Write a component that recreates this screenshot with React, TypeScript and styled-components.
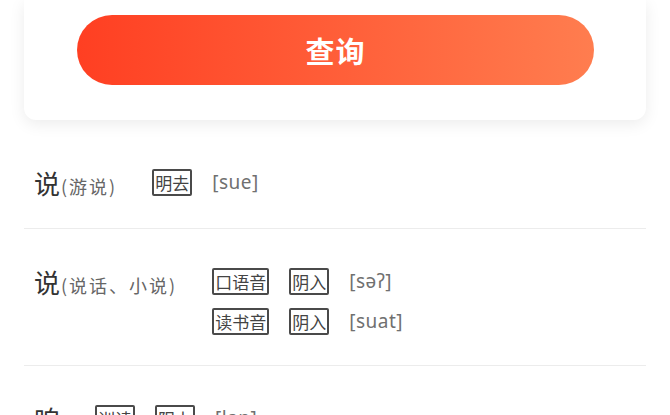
import React from "react";
import styled, { createGlobalStyle } from "styled-components";

const Global = createGlobalStyle`
  html, body { margin: 0; padding: 0; background: #fff; }
  body { font-family: "Noto Sans CJK SC", "Noto Sans", sans-serif; overflow: hidden; }
`;

const Page = styled.div`
  width: 670px;
  height: 415px;
  overflow: hidden;
  background: #fff;
`;

const Card = styled.div`
  margin: 0 24px;
  padding: 15px 52px 35px 53px;
  background: #fff;
  border-radius: 0 0 12px 12px;
  box-shadow: 0 4px 16px rgba(0, 0, 0, 0.08);
`;

const SearchButton = styled.button`
  display: flex;
  align-items: center;
  justify-content: center;
  width: 100%;
  height: 70px;
  border: none;
  border-radius: 35px;
  background: linear-gradient(90deg, #ff3f22 0%, #ff7d4f 100%);
  color: #fff;
  font-family: "Noto Sans CJK SC", sans-serif;
  font-size: 29px;
  font-weight: 700;
  letter-spacing: 1px;
  padding: 0;
`;

const List = styled.div`
  margin: 10px 24px 0;
`;

const Row = styled.div`
  display: flex;
  align-items: flex-start;
  gap: 35px;
  padding: 38px 10px 30px;
  border-bottom: 1px solid #ececec;
`;

const Label = styled.div`
  display: flex;
  align-items: baseline;
  height: 30px;
  line-height: 30px;
  white-space: nowrap;
`;

const Char = styled.span`
  font-size: 26px;
  line-height: 30px;
  color: #333;
`;

const Note = styled.span`
  font-size: 18px;
  line-height: 30px;
  color: #666;
  letter-spacing: 2px;
  margin-left: 1px;
`;

const Readings = styled.div`
  display: flex;
  flex-direction: column;
  gap: 13px;
  padding-top: 1px;
`;

const Reading = styled.div`
  display: flex;
  align-items: center;
  gap: 20px;
  height: 27px;
`;

const Tag = styled.span`
  display: flex;
  align-items: center;
  box-sizing: border-box;
  height: 27px;
  padding: 0 1px;
  border: 2px solid #4a4a4a;
  border-radius: 2px;
  font-size: 17px;
  line-height: 23px;
  color: #444;
  white-space: nowrap;
`;

const Pron = styled.span`
  font-family: "Noto Sans", sans-serif;
  font-size: 19px;
  color: #707070;
  letter-spacing: 0.5px;
  line-height: 27px;
`;

type ReadingT = { tags: string[]; pron: string };
type Entry = { char: string; note?: string; readings: ReadingT[] };

const entries: Entry[] = [
  { char: "说", note: "(游说)", readings: [{ tags: ["明去"], pron: "[sue]" }] },
  {
    char: "说",
    note: "(说话、小说)",
    readings: [
      { tags: ["口语音", "阴入"], pron: "[səʔ]" },
      { tags: ["读书音", "阴入"], pron: "[suat]" },
    ],
  },
  { char: "咱", readings: [{ tags: ["训读", "阳上"], pron: "[lan]" }] },
];

export default function App() {
  return (
    <Page>
      <Global />
      <Card>
        <SearchButton>查询</SearchButton>
      </Card>
      <List>
        {entries.map((e, i) => (
          <Row key={i}>
            <Label>
              <Char>{e.char}</Char>
              {e.note && <Note>{e.note}</Note>}
            </Label>
            <Readings>
              {e.readings.map((r, j) => (
                <Reading key={j}>
                  {r.tags.map((t) => (
                    <Tag key={t}>{t}</Tag>
                  ))}
                  <Pron>{r.pron}</Pron>
                </Reading>
              ))}
            </Readings>
          </Row>
        ))}
      </List>
    </Page>
  );
}
